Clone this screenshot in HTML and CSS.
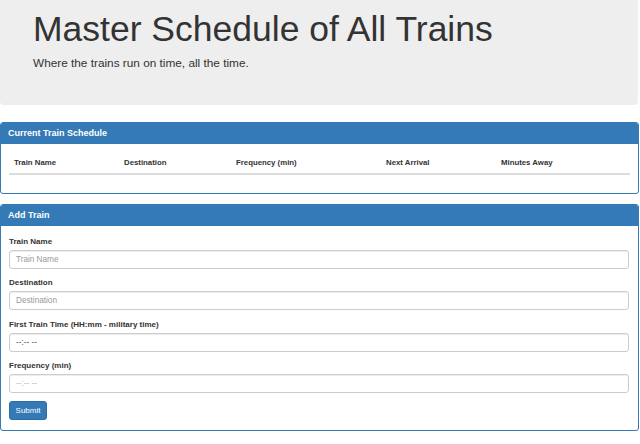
FILE: index.html
```html
<!DOCTYPE html>
<html>
<head>
<meta charset="utf-8">
<link rel="stylesheet" href="styles.css">
</head>
<body>
<div class="page">
  <header class="jumbotron">
    <h1 class="title">Master Schedule of All Trains</h1>
    <p class="lead">Where the trains run on time, all the time.</p>
  </header>

  <section class="panel">
    <div class="panel-heading">Current Train Schedule</div>
    <div class="panel-body schedule-body">
      <table class="schedule">
        <thead>
          <tr>
            <th class="c1">Train Name</th>
            <th class="c2">Destination</th>
            <th class="c3">Frequency (min)</th>
            <th class="c4">Next Arrival</th>
            <th class="c5">Minutes Away</th>
          </tr>
        </thead>
        <tbody></tbody>
      </table>
    </div>
  </section>

  <section class="panel">
    <div class="panel-heading">Add Train</div>
    <form class="panel-body form">
      <div class="group">
        <label class="label">Train Name</label>
        <input class="input" type="text" placeholder="Train Name">
      </div>
      <div class="group">
        <label class="label">Destination</label>
        <input class="input" type="text" placeholder="Destination">
      </div>
      <div class="group">
        <label class="label">First Train Time (HH:mm - military time)</label>
        <div class="input fake dark">--:-- --</div>
      </div>
      <div class="group">
        <label class="label">Frequency (min)</label>
        <div class="input fake">--:-- --</div>
      </div>
      <button class="btn" type="button">Submit</button>
    </form>
  </section>
</div>
</body>
</html>
```
FILE: styles.css
```css
* { box-sizing: border-box; }
html, body { margin: 0; padding: 0; background: #fff; }
body {
  font-family: "Liberation Sans", Arial, Helvetica, sans-serif;
  color: #333;
}
.page { width: 639px; }

.jumbotron {
  width: 638px;
  height: 105px;
  background: #eee;
  border-radius: 0 0 4px 4px;
  padding: 8px 0 0 33px;
}
.title {
  margin: 0;
  font-size: 35.5px;
  font-weight: 400;
  line-height: 42px;
  color: #333;
}
.lead {
  margin: 5px 0 0;
  font-size: 11.8px;
  line-height: 16px;
  color: #333;
}

.panel {
  border: 1px solid #337ab7;
  border-radius: 3px;
  margin-top: 17px;
  background: #fff;
}
.panel + .panel { margin-top: 10px; }
.panel-heading {
  background: #337ab7;
  color: #fff;
  font-weight: bold;
  font-size: 9px;
  height: 21px;
  line-height: 20px;
  padding: 0 7px;
  border-radius: 2px 2px 0 0;
}

.schedule-body { padding: 8px 8px 18px; }
.schedule {
  width: 100%;
  border-collapse: collapse;
}
.schedule th {
  text-align: left;
  font-size: 7.8px;
  font-weight: bold;
  height: 22px;
  padding: 0 0 0 5px;
  border-bottom: 2px solid #ddd;
  vertical-align: middle;
}
.c1 { width: 110px; }
.c2 { width: 112px; }
.c3 { width: 150px; }
.c4 { width: 115px; }

.form { padding: 10px 8px 10px; display: flex; flex-direction: column; }
.group { display: flex; flex-direction: column; margin-bottom: 8.5px; }
.label {
  font-size: 8px;
  font-weight: bold;
  line-height: 11px;
  margin-bottom: 2.5px;
  color: #333;
}
.input {
  width: 620px;
  height: 19px;
  border: 1px solid #ccc;
  border-radius: 3px;
  padding: 0 6px;
  font-family: "Liberation Sans", Arial, sans-serif;
  font-size: 8.2px;
  color: #555;
  box-shadow: inset 0 1px 1px rgba(0,0,0,.075);
  background: #fff;
}
.input::placeholder { color: #999; }
.fake { display: flex; align-items: center; color: #bbb; }
.fake.dark { color: #555; }
.group:nth-child(2) { margin-bottom: 9.5px; }
.btn {
  align-self: flex-start;
  margin-top: 0;
  width: 38px;
  height: 19px;
  background: #337ab7;
  border: 1px solid #2e6da4;
  border-radius: 3px;
  color: #fff;
  font-family: "Liberation Sans", Arial, sans-serif;
  font-size: 8px;
  padding: 0;
}
```
